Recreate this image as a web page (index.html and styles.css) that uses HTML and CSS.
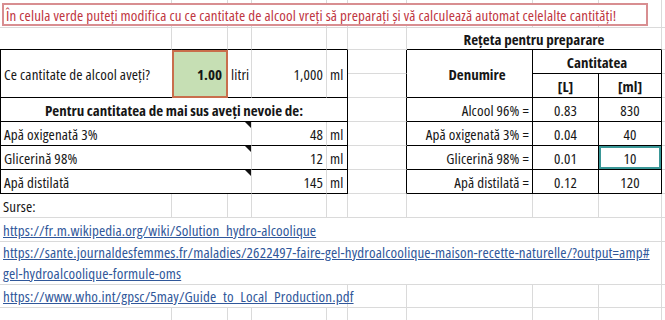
FILE: index.html
```html
<!DOCTYPE html>
<html lang="ro">
<head>
<meta charset="utf-8">
<title>Rețeta gel hidroalcoolic</title>
<link rel="stylesheet" href="styles.css">
</head>
<body>
<div class="sheet">
  <!-- row 1 -->
  <div class="c anchor"><div class="note">În celula verde puteți modifica cu ce cantitate de alcool vreți să preparați și vă calculează automat celelalte cantități!</div></div>
  <div class="c"></div><div class="c"></div><div class="c"></div><div class="c"></div>
  <div class="c"></div><div class="c"></div><div class="c"></div><div class="c"></div><div class="c"></div>

  <!-- row 2 -->
  <div class="c bb"></div><div class="c bb"></div><div class="c bb"></div><div class="c bb"></div><div class="c bb"></div>
  <div class="c"></div>
  <div class="c bb b m span3">Rețeta pentru preparare</div>
  <div class="c"></div>

  <!-- rows 3-4 -->
  <div class="c bl bb nr tall">Ce cantitate de alcool aveți?</div>
  <div class="c green tall b r">1.00</div>
  <div class="c bb tall">litri</div>
  <div class="c bb tall r">1,000</div>
  <div class="c bb br tall">ml</div>
  <div class="c br"></div>
  <div class="c bb br tall b m denum">Denumire</div>
  <div class="c bb br b m span2">Cantitatea</div>
  <div class="c"></div>
  <div class="c br"></div>
  <div class="c bb br b m">[L]</div>
  <div class="c bb br b m">[ml]</div>
  <div class="c"></div>

  <!-- row 5 -->
  <div class="c bl bb br b m span5">Pentru cantitatea de mai sus aveți nevoie de:</div>
  <div class="c br"></div>
  <div class="c bb br r">Alcool 96% =</div>
  <div class="c bb br m">0.83</div>
  <div class="c bb br m">830</div>
  <div class="c"></div>

  <!-- row 6 -->
  <div class="c bl bb span3 comment">Apă oxigenată 3%</div>
  <div class="c bb r">48</div>
  <div class="c bb br">ml</div>
  <div class="c br"></div>
  <div class="c bb br r">Apă oxigenată 3% =</div>
  <div class="c bb br m">0.04</div>
  <div class="c bb br m">40</div>
  <div class="c"></div>

  <!-- row 7 -->
  <div class="c bl bb span3 comment">Glicerină 98%</div>
  <div class="c bb r">12</div>
  <div class="c bb br">ml</div>
  <div class="c br"></div>
  <div class="c bb br r">Glicerină 98% =</div>
  <div class="c bb br m">0.01</div>
  <div class="c bb br m sel">10</div>
  <div class="c"></div>

  <!-- row 8 -->
  <div class="c bl bb span3 comment">Apă distilată</div>
  <div class="c bb r">145</div>
  <div class="c bb br">ml</div>
  <div class="c br"></div>
  <div class="c bb br r">Apă distilată =</div>
  <div class="c bb br m">0.12</div>
  <div class="c bb br m">120</div>
  <div class="c"></div>

  <!-- row 9 -->
  <div class="c">Surse:</div>
  <div class="c"></div><div class="c"></div><div class="c"></div><div class="c"></div>
  <div class="c"></div><div class="c"></div><div class="c"></div><div class="c"></div><div class="c"></div>

  <!-- row 10 -->
  <div class="c span9"><a href="#">https://fr.m.wikipedia.org/wiki/Solution_hydro-alcoolique</a></div>
  <div class="c"></div>

  <!-- row 11 -->
  <div class="c span9 wrap"><a href="#">https://sante.journaldesfemmes.fr/maladies/2622497-faire-gel-hydroalcoolique-maison-recette-naturelle/?output=amp#<br>gel-hydroalcoolique-formule-oms</a></div>
  <div class="c"></div>

  <!-- row 12 -->
  <div class="c span5"><a href="#">https://www.who.int/gpsc/5may/Guide_to_Local_Production.pdf</a></div>
  <div class="c"></div><div class="c"></div><div class="c"></div><div class="c"></div><div class="c"></div>

  <!-- row 13 -->
  <div class="c"></div><div class="c"></div><div class="c"></div><div class="c"></div><div class="c"></div>
  <div class="c"></div><div class="c"></div><div class="c"></div><div class="c"></div><div class="c"></div>
</div>
</body>
</html>
```
FILE: styles.css
```css
html, body {
  margin: 0;
  padding: 0;
  background: #ffffff;
  overflow: hidden;
}

.sheet {
  display: grid;
  grid-template-columns: 172px 56px 24px 75px 21px 59px 126px 66px 63px 1fr;
  grid-template-rows: 28px 22px repeat(8, 24px) 43px 23px 24px;
  width: 665px;
  font-family: "Open Sans", "DejaVu Sans", sans-serif;
  font-stretch: 86%;
  font-size: 15px;
  letter-spacing: 0.14px;
  color: #161616;
}

.c {
  box-sizing: border-box;
  display: flex;
  align-items: center;
  justify-content: flex-start;
  padding: 0 3px;
  white-space: nowrap;
  border-right: 1px solid #dadada;
  border-bottom: 1px solid #dadada;
  min-width: 0;
}

.bl { border-left: 1px solid #000; }
.br { border-right: 1px solid #000; }
.bb { border-bottom: 1px solid #000; }
.nr { border-right: none; }

.b { font-weight: 700; letter-spacing: 0; }
.r { justify-content: flex-end; }
.m { justify-content: center; }

.tall { grid-row: span 2; }
.span2 { grid-column: span 2; }
.span3 { grid-column: span 3; }
.span5 { grid-column: span 5; }
.span9 { grid-column: span 9; }

.denum { padding-left: 18px; }

.anchor {
  position: relative;
}

.note {
  position: absolute;
  left: 2px;
  top: 3px;
  width: 646px;
  height: 23px;
  box-sizing: border-box;
  border: 2px solid #d88e91;
  background: #fff;
  color: #c0363f;
  padding: 0 2px;
  display: flex;
  align-items: center;
  z-index: 2;
}

.green {
  background: #c6dfb4;
  border: 2px solid #c96e4c;
  padding-right: 4px;
}

.comment {
  position: relative;
}
.comment::after {
  content: "";
  position: absolute;
  right: 0;
  top: 0;
  width: 0;
  height: 0;
  border-top: 6px solid #111;
  border-left: 6px solid transparent;
}

.sel {
  box-shadow: inset 0 0 0 2px #3a9797;
}

.wrap {
  white-space: normal;
  line-height: 21px;
}

a {
  color: #30579a;
  text-decoration: underline;
}
```
